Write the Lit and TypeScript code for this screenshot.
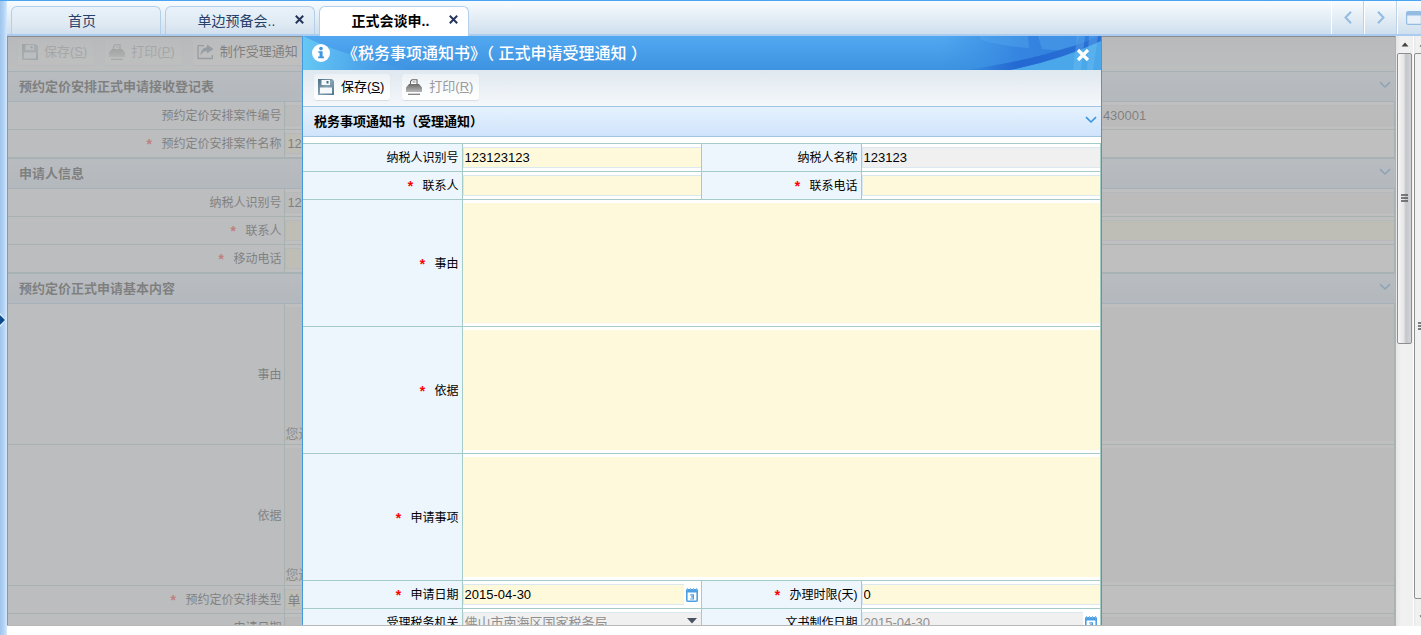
import { LitElement, html, css, svg, nothing, TemplateResult } from "lit";
import { customElement, state } from "lit/decorators.js";

interface Field {
  id: string;
  label?: string;
  required?: boolean;
  kind: "text" | "area" | "date" | "select" | "blank";
  value?: string;
  tone?: "need" | "lock";
  muted?: boolean;
  wide?: boolean;
  hint?: string;
  tail?: boolean;
}

const chevronDown = html`<svg class="chev" viewBox="0 0 12 8" width="12" height="8" aria-hidden="true">
  <path d="M1 1.2 L6 6 L11 1.2" fill="none" stroke="currentColor" stroke-width="1.6" />
</svg>`;

const saveIcon = html`<svg viewBox="0 0 16 16" width="16" height="16" aria-hidden="true">
  <defs><linearGradient id="disk" x2="1" y2="1"><stop offset="0" stop-color="#4a6b80" /><stop offset=".5" stop-color="#86a3b5" /><stop offset="1" stop-color="#4f7288" /></linearGradient></defs>
  <path d="M0 0H14L16 2V16H0Z" fill="url(#disk)" />
  <path d="M3.5 1H12V6H3.5Z" fill="#f4f8fa" />
  <path d="M8.5 2H10.5V4.5H8.5Z" fill="#4a6b80" />
  <path d="M2 8.5H14V14.5H2Z" fill="#f6f9fb" />
</svg>`;

const printIcon = html`<svg viewBox="0 0 16 16" width="16" height="16" aria-hidden="true">
  <defs><linearGradient id="prn" x2="0" y2="1"><stop offset="0" stop-color="#6a6a6a" /><stop offset="1" stop-color="#b8b8b8" /></linearGradient></defs>
  <path d="M4.5 5V2.5L6 .8H11V5" fill="#fff" stroke="#666" stroke-width="1.1" />
  <path d="M6.5 3H9.5" stroke="#888" />
  <path d="M3 5H13L16 8.5V13H0V8.5Z" fill="url(#prn)" />
  <path d="M2 15.3H14" stroke="#777" stroke-width="1.2" />
</svg>`;

const shareIcon = html`<svg viewBox="0 0 17 16" width="17" height="16" aria-hidden="true">
  <path d="M7 1.7H1V14.5H15.3V11" fill="none" stroke="#5b7b8f" stroke-width="1.3" />
  <path d="M10 .5L16.5 5L10 9.5V7C7 7 5 8.5 3.5 11.5C3.5 7 6 3.5 10 3.2Z" fill="#5b7b8f" />
</svg>`;

const calendarIcon = html`<svg viewBox="0 0 12 14" width="12" height="14" aria-hidden="true">
  <rect x=".8" y="1.8" width="10.4" height="11.4" rx="1" fill="#fff" stroke="#4c9fe2" stroke-width="1.6" />
  <path d="M0 1.5H12V4.5H0Z" fill="#4c9fe2" />
  <path d="M1.5 0V2.2M4.5 0V2.2M7.5 0V2.2M10.5 0V2.2" stroke="#7fbcec" stroke-width="1" />
  <path d="M4.2 6.8H7.4V11H4.2M5 8.9H7.4" fill="none" stroke="#4c9fe2" stroke-width="1.2" />
</svg>`;

const arrowHead = (up: boolean) => html`<svg viewBox="0 0 8 5" width="8" height="5" aria-hidden="true">
  ${up ? svg`<path d="M4 .5L7.5 4.5H.5Z" fill="#444" />` : svg`<path d="M4 4.5L7.5 .5H.5Z" fill="#444" />`}
</svg>`;

@customElement("app-root")
export class AppRoot extends LitElement {
  static styles = css`
    :host {
      display: block;
      height: 100vh;
      overflow: hidden;
      background: #fff;
      color: #000;
      font: 12px/20px "Liberation Sans", "Noto Sans CJK SC", sans-serif;
    }
    * { box-sizing: border-box; }
    button, input, textarea, select {
      font: inherit;
      color: inherit;
      margin: 0;
      border: 0;
      border-radius: 0;
      background: none;
      padding: 0;
      outline: 0;
    }
    h1, h2 { margin: 0; }
    svg { display: block; flex: none; }

    .app { display: flex; height: 100%; border-top: 1px solid #4ba4f2; }
    .rail {
      width: 7px;
      flex: none;
      display: flex;
      align-items: center;
      padding-top: 4px;
      background: linear-gradient(90deg, #9fc5ee, #b4d3f4 55%, #d4e9fd);
    }
    .main { flex: 1; min-width: 0; display: flex; flex-direction: column; }

    .tabbar {
      flex: none;
      height: 35px;
      display: flex;
      align-items: flex-end;
      padding-left: 4px;
      background: linear-gradient(#f8fcff, #e2ecf4 55%, #cfdfee);
      border-bottom: 2px solid #a9ccf0;
    }
    .tab {
      width: 150px;
      height: 28px;
      margin-right: 4px;
      display: flex;
      align-items: center;
      border: 1px solid #b4cfe9;
      border-bottom: 0;
      border-radius: 6px 6px 0 0;
      background: linear-gradient(#e9f2fa, #e0eaf3 60%, #d2e0ee);
      color: #26416b;
      font-size: 14px;
    }
    .tab .name { flex: 1; font: inherit; color: inherit; text-align: center; padding-right: 8px; }
    .tab.closable .name { padding: 0 0 0 12px; }
    .tab .close { padding: 0 10px 2px 0; }
    .tab.current { background: #fff; color: #000; font-weight: bold; height: 30px; margin-bottom: -2px; padding-bottom: 2px; }
    .tools { margin-left: auto; display: flex; align-self: stretch; overflow: hidden; }
    .tools button {
      width: 33px;
      display: grid;
      place-items: center;
      border-left: 1px solid #fff;
      border-right: 1px solid #bfd3e6;
    }
    .tools button:last-child { width: 24px; justify-items: start; padding-left: 8px; border-right: 0; }

    .work { flex: 1; min-height: 0; display: flex; margin-bottom: 9px; }
    .stage {
      flex: 1;
      min-width: 0;
      position: relative;
      overflow: hidden;
      border-bottom: 1px solid #b8b8b8;
      border-right: 1px solid #b0b3b5;
    }
    .page { border-left: 1px solid #555; border-top: 1px solid #333; }
    .mask { position: absolute; inset: 0; background: rgba(170, 170, 170, 0.75); }

    .toolbar {
      height: 36px;
      display: flex;
      align-items: center;
      gap: 12px;
      padding: 0 11px;
      background: linear-gradient(#dfe8ef, #f5f8fb);
      font-size: 13px;
    }
    .toolbar button {
      display: flex;
      align-items: center;
      gap: 7px;
      height: 26px;
      padding: 0 6px 0 4px;
      border-radius: 3px;
      background: linear-gradient(rgba(255, 255, 255, 0.35), #fff);
      box-shadow: 0 1px 1px rgba(150, 165, 180, 0.3);
      white-space: nowrap;
    }
    .toolbar button:disabled { color: #9b9b9b; }
    .page .toolbar { height: 34px; padding: 0 10px 4px; }
    .page .toolbar button { gap: 6px; }
    .page .toolbar button:disabled { color: #777; opacity: 0.7; }

    .band {
      display: flex;
      align-items: center;
      justify-content: space-between;
      height: 31px;
      padding: 0 4px 0 11px;
      border: 1px solid #9fc5e2;
      border-width: 1px 0;
      background: linear-gradient(#e6f2fe, #cfe4fb);
    }
    .band h2 { font-size: 13px; line-height: 20px; font-weight: bold; }
    .band button { color: #3a93dc; padding-bottom: 4px; }

    .form { display: grid; grid-template-columns: 20% 30% 20% 30%; }
    .label, .cell { border-right: 1px solid #a5cbc6; border-bottom: 1px solid #a5cbc6; min-width: 0; }
    .label {
      display: flex;
      align-items: center;
      justify-content: flex-end;
      gap: 8px;
      padding: 1px 3px 0 0;
      background: #edf5fd;
    }
    .star { color: #f00; font: bold 14px/14px "Liberation Mono", monospace; height: 10px; }
    .cell { position: relative; display: flex; align-items: center; height: 28px; background: #fff; }
    .wide { grid-column: span 3; }
    .tall { height: 127px; padding: 3px 0; align-items: stretch; }
    .page .tall { height: 141px; }
    .cell input, .cell select, .cell textarea { flex: 1; min-width: 0; width: 100%; font-size: 13px; }
    .cell input, .cell select {
      height: 21px;
      padding: 0 1px;
      border: 1px solid #dbe8ef;
      border-right: 0;
      appearance: none;
    }
    .cell textarea { resize: none; display: block; padding: 2px; }
    .need { background: #fff9dc; }
    .lock { background: #f0f0f0; }
    .muted { color: #8f8f8f; opacity: 1; }
    .cell input.tail { padding-left: 123px; }
    .pick { width: 17px; display: grid; place-items: center; }
    .drop { position: absolute; right: 4px; top: 9px; pointer-events: none; }
    .hint { position: absolute; left: 0; bottom: 0; color: #333; font-size: 13px; }

    .dialog {
      position: absolute;
      top: 0;
      bottom: 0;
      left: 50%;
      width: 800px;
      margin-left: -399px;
      overflow: hidden;
      background: #fff;
      border: 1px solid #4499de;
      border-width: 0 1px;
    }
    .title {
      position: relative;
      height: 34px;
      display: flex;
      align-items: center;
      padding: 0 11px 0 9px;
      background: linear-gradient(#52a8f0, #3d93e0);
      color: #fff;
    }
    .title h1 { flex: 1; padding: 2px 0 0 12px; font-size: 16px; line-height: 20px; font-weight: 500; }
    .title > * { position: relative; }
    .title .art { position: absolute; top: 0; right: 0; }
    .title .glow { position: absolute; top: 0; left: 0; }
    .title button { padding-top: 3px; }
    .dialog .toolbar { padding-bottom: 2px; }
    .dialog .form { margin-top: 6px; border-top: 1px solid #a5cbc6; }

    .bar {
      flex: none;
      width: 17px;
      display: flex;
      flex-direction: column;
      align-items: center;
      padding: 6px 0;
      gap: 6px;
      background: linear-gradient(90deg, #e6e6e6, #f1f1f1 30%, #f0f0f0);
    }
    .thumb {
      width: 15px;
      flex: 0 0 291px;
      display: grid;
      place-items: center;
      border: 1px solid #8e8e8e;
      border-radius: 2px;
      background: linear-gradient(90deg, #f6f6f6, #e6e6e6 45%, #c4c6ca 60%, #d4d5d9);
    }
    .outer { width: 8px; overflow: hidden; align-items: flex-start; border-left: 1px solid #fff; }
    .outer > * { margin-left: 5px; }
    .outer .thumb { margin: 0 0 10px; flex: 1 1 auto; background: #f1f1f1; place-items: center start; padding-left: 3px; }
  `;

  @state() private current = 2;

  private tabs = ["首页", "单边预备会..", "正式会谈申.."];

  private caseFields: Field[] = [
    { id: "p1", label: "预约定价安排案件编号", kind: "text", tone: "lock" },
    { id: "p2", label: "", kind: "text", tone: "lock", value: "430001", tail: true },
    { id: "p3", label: "预约定价安排案件名称", required: true, kind: "text", tone: "need", value: "12" },
    { id: "p4", kind: "blank" },
  ];

  private applicantFields: Field[] = [
    { id: "p5", label: "纳税人识别号", kind: "text", tone: "lock", value: "12" },
    { id: "p6", label: "", kind: "text", tone: "lock" },
    { id: "p7", label: "联系人", required: true, kind: "text", tone: "need" },
    { id: "p8", label: "", kind: "text", tone: "need" },
    { id: "p9", label: "移动电话", required: true, kind: "text", tone: "need" },
    { id: "p10", kind: "blank" },
  ];

  private basicFields: Field[] = [
    { id: "p11", label: "事由", kind: "area", tone: "lock", wide: true, hint: "您还" },
    { id: "p12", label: "依据", kind: "area", tone: "lock", wide: true, hint: "您还" },
    { id: "p13", label: "预约定价安排类型", required: true, kind: "text", tone: "need", value: "单" },
    { id: "p14", kind: "blank" },
    { id: "p15", label: "申请日期", kind: "text", tone: "lock" },
    { id: "p16", label: "", kind: "text", tone: "lock" },
  ];

  private noticeFields: Field[] = [
    { id: "n1", label: "纳税人识别号", kind: "text", tone: "need", value: "123123123" },
    { id: "n2", label: "纳税人名称", kind: "text", tone: "lock", value: "123123" },
    { id: "n3", label: "联系人", required: true, kind: "text", tone: "need" },
    { id: "n4", label: "联系电话", required: true, kind: "text", tone: "need" },
    { id: "n5", label: "事由", required: true, kind: "area", tone: "need", wide: true },
    { id: "n6", label: "依据", required: true, kind: "area", tone: "need", wide: true },
    { id: "n7", label: "申请事项", required: true, kind: "area", tone: "need", wide: true },
    { id: "n8", label: "申请日期", required: true, kind: "date", tone: "need", value: "2015-04-30" },
    { id: "n9", label: "办理时限(天)", required: true, kind: "text", tone: "need", value: "0" },
    { id: "n10", label: "受理税务机关", kind: "select", tone: "lock", value: "佛山市南海区国家税务局", muted: true },
    { id: "n11", label: "文书制作日期", kind: "date", tone: "lock", value: "2015-04-30", muted: true },
  ];

  private control(f: Field): TemplateResult | typeof nothing {
    const cls = `${f.tone ?? ""} ${f.muted ? "muted" : ""} ${f.tail ? "tail" : ""}`;
    switch (f.kind) {
      case "area":
        return html`<textarea id=${f.id} class=${cls}></textarea>${f.hint ? html`<span class="hint">${f.hint}</span>` : nothing}`;
      case "date":
        return html`<input id=${f.id} class=${cls} type="text" .value=${f.value ?? ""} ?disabled=${!!f.muted} />
          <button class="pick" aria-label="calendar">${calendarIcon}</button>`;
      case "select":
        return html`<select id=${f.id} class=${cls} disabled><option>${f.value}</option></select>
          <svg class="drop" viewBox="0 0 10 6" width="10" height="6" aria-hidden="true"><path d="M0 0H10L5 5.5Z" fill="#4a5263" /></svg>`;
      case "text":
        return html`<input id=${f.id} class=${cls} type="text" .value=${f.value ?? ""} />`;
      default:
        return nothing;
    }
  }

  private form(fields: Field[]) {
    return html`<div class="form">
      ${fields.map(
        (f) => html`<label class="label" for=${f.id}>
            ${f.required ? html`<span class="star">*</span>` : nothing}<span>${f.label}</span>
          </label>
          <div class="cell ${f.wide ? "wide" : ""} ${f.kind === "area" ? "tall" : ""}">${this.control(f)}</div>`
      )}
    </div>`;
  }

  private band(text: string) {
    return html`<div class="band"><h2>${text}</h2><button aria-label="toggle">${chevronDown}</button></div>`;
  }

  private grip() {
    return html`<svg viewBox="0 0 7 9" width="7" height="9" aria-hidden="true">
      <path d="M0 1H7M0 4H7M0 7H7" stroke="#555" stroke-width="1.4" />
    </svg>`;
  }

  render() {
    return html`<div class="app">
      <div class="rail">
        <svg viewBox="0 0 6 14" width="6" height="14" aria-hidden="true">
          <path d="M0 0L6 7L0 14Z" fill="#e8f3fd" /><path d="M0 2L5 7L0 12Z" fill="#0b4a8f" />
        </svg>
      </div>
      <div class="main">
        <nav class="tabbar">
          ${this.tabs.map(
            (t, i) => html`<div class="tab ${i ? "closable" : ""} ${i === this.current ? "current" : ""}">
              <button class="name" @click=${() => (this.current = i)}>${t}</button>
              ${i
                ? html`<button class="close" aria-label="close">
                    <svg viewBox="0 0 9 9" width="9" height="9"><path d="M.8 .8L8.2 8.2M8.2 .8L.8 8.2" stroke="#26365a" stroke-width="2" /></svg>
                  </button>`
                : nothing}
            </div>`
          )}
          <div class="tools">
            <button aria-label="previous"><svg viewBox="0 0 8 13" width="8" height="13"><path d="M7 .8L1.5 6.5L7 12.2" fill="none" stroke="#94bbe2" stroke-width="2" /></svg></button>
            <button aria-label="next"><svg viewBox="0 0 8 13" width="8" height="13"><path d="M1 .8L6.5 6.5L1 12.2" fill="none" stroke="#94bbe2" stroke-width="2" /></svg></button>
            <button aria-label="window"><svg viewBox="0 0 16 14" width="16" height="14"><rect x=".6" y=".6" width="14.8" height="12.8" rx="1.5" fill="#e9f1f8" stroke="#94bbe2" stroke-width="1.2" /><path d="M1 1H15V4.5H1Z" fill="#94bbe2" /></svg></button>
          </div>
        </nav>
        <div class="work">
          <main class="stage">
            <div class="page">
              <div class="toolbar">
                <button disabled>${saveIcon}<span>保存(<u>S</u>)</span></button>
                <button disabled>${printIcon}<span>打印(<u>P</u>)</span></button>
                <button>${shareIcon}<span>制作受理通知</span></button>
              </div>
              ${this.band("预约定价安排正式申请接收登记表")} ${this.form(this.caseFields)}
              ${this.band("申请人信息")} ${this.form(this.applicantFields)}
              ${this.band("预约定价正式申请基本内容")} ${this.form(this.basicFields)}
            </div>
            <div class="mask"></div>
            <section class="dialog" role="dialog" aria-labelledby="dlg-title">
              <header class="title">
                <svg class="glow" viewBox="0 0 110 34" width="110" height="34" aria-hidden="true">
                  <defs><linearGradient id="g1"><stop offset="0" stop-color="#66c8f4" /><stop offset="1" stop-color="#52a8f0" stop-opacity="0" /></linearGradient></defs>
                  <path d="M0 0Q40 20 110 34H0Z" fill="url(#g1)" /><path d="M0 12L70 34H0Z" fill="url(#g1)" opacity=".4" />
                </svg>
                <svg class="art" viewBox="0 0 160 34" width="160" height="34" aria-hidden="true">
                  <defs>
                    <linearGradient id="g2"><stop offset="0" stop-color="#3a8fe4" stop-opacity="0" /><stop offset=".5" stop-color="#3484e0" /><stop offset="1" stop-color="#2f7edd" /></linearGradient>
                    <linearGradient id="g3"><stop offset="0" stop-color="#1f66cf" stop-opacity="0" /><stop offset=".4" stop-color="#2468d2" /><stop offset="1" stop-color="#2a72d6" /></linearGradient>
                  </defs>
                  <path d="M0 0H160V34H0Z" fill="url(#g2)" />
                  <path d="M38 0H87L88 12Q60 10 40 4ZM97 0H138L134 11L125 15L101 13Z" fill="#55a6ee" opacity=".45" />
                  <path d="M25 34Q85 25 122 13Q145 7 160 -2V5Q120 24 70 34Z" fill="url(#g3)" />
                  <path d="M70 34Q120 24 160 5V34Z" fill="#4aa8ea" />
                  <path d="M136 0H144L140 34H132ZM148 0H157L152 34H146Z" fill="#7cc4f4" opacity=".3" />
                </svg>
                <svg viewBox="0 0 18 18" width="18" height="18" aria-hidden="true">
                  <circle cx="9" cy="9" r="9" fill="#fff" /><circle cx="9" cy="4.6" r="1.8" fill="#3e97e0" />
                  <path d="M6.3 7.3H10.6V12.6H12V14.2H6.2V12.6H7.6V8.8H6.3Z" fill="#3e97e0" />
                </svg>
                <h1 id="dlg-title">《税务事项通知书》（ 正式申请受理通知 ）</h1>
                <button aria-label="close">
                  <svg viewBox="0 0 14 14" width="14" height="14"><path d="M2 2L12 12M12 2L2 12" stroke="#fff" stroke-width="3.2" /></svg>
                </button>
              </header>
              <div class="toolbar">
                <button>${saveIcon}<span>保存(<u>S</u>)</span></button>
                <button disabled>${printIcon}<span>打印(<u>R</u>)</span></button>
              </div>
              ${this.band("税务事项通知书（受理通知）")} ${this.form(this.noticeFields)}
            </section>
          </main>
          <div class="bar" aria-hidden="true">${arrowHead(true)}<div class="thumb">${this.grip()}</div></div>
          <div class="bar outer" aria-hidden="true">${arrowHead(true)}<div class="thumb">${this.grip()}</div>${arrowHead(false)}</div>
        </div>
      </div>
    </div>`;
  }
}
